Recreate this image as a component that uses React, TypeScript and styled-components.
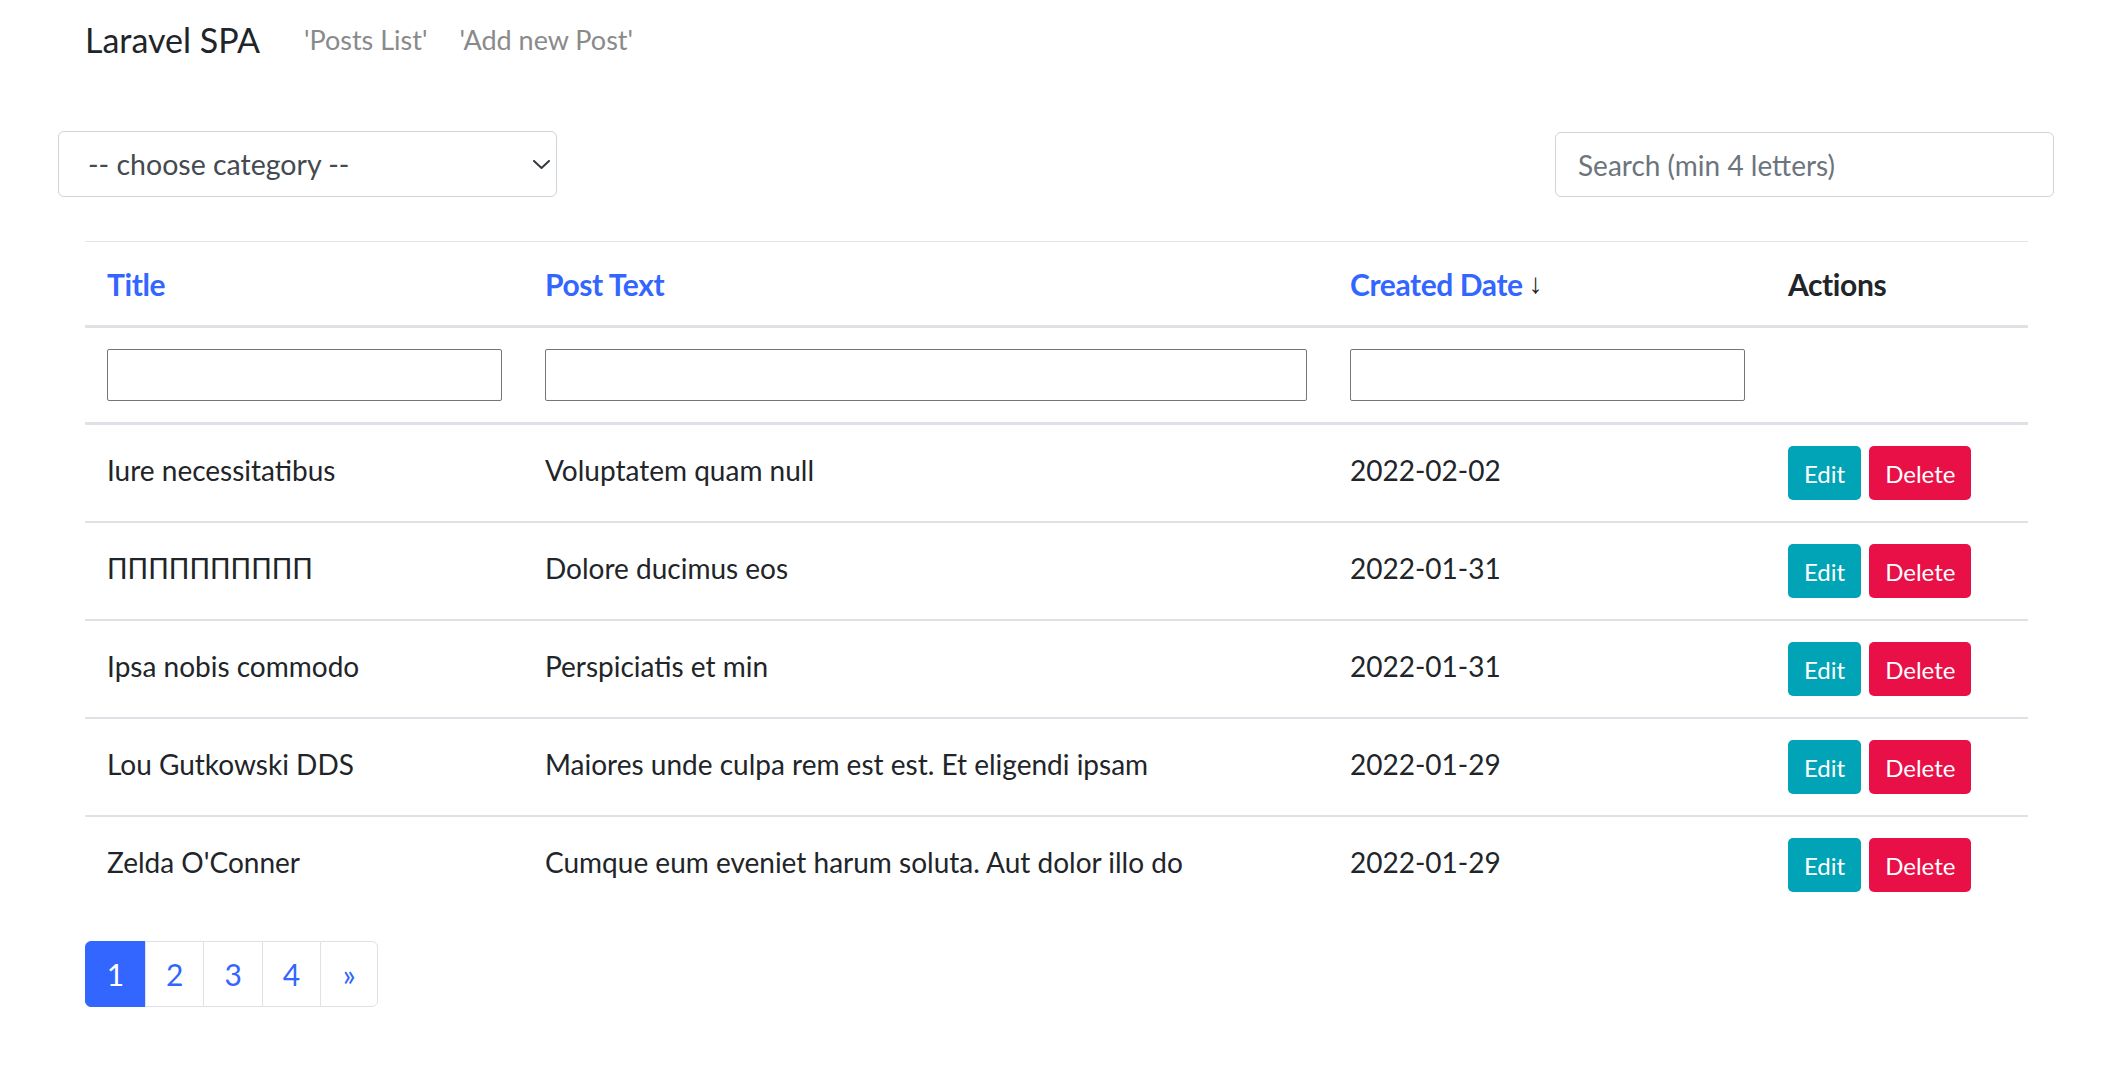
import React from 'react';
import styled, { createGlobalStyle } from 'styled-components';

const Global = createGlobalStyle`
  html, body { margin: 0; padding: 0; background: #ffffff; }
  body { font-family: Lato, "Noto Sans", sans-serif; color: #212529; }
  *, *::before, *::after { box-sizing: border-box; }
`;

const Page = styled.div`
  width: 2126px;
  padding: 0 98px 0 85px;
`;

const Nav = styled.nav`
  display: flex;
  align-items: center;
  padding-top: 19px;
  height: 61px;
`;

const Brand = styled.a`
  font-size: 34px;
  line-height: 1.2;
  color: #212529;
  text-decoration: none;
  margin-right: 44px;
`;

const NavLink = styled.a`
  font-size: 27px;
  line-height: 1.2;
  color: #8a8a8a;
  text-decoration: none;
  margin-right: 32px;
`;

const FilterBar = styled.div`
  display: flex;
  justify-content: space-between;
  margin: 70px -26px 0 -27px;
`;

const SelectWrap = styled.div`
  position: relative;
  width: 499px;
  height: 66px;
`;

const Select = styled.select`
  appearance: none;
  width: 100%;
  height: 100%;
  border: 1px solid #ced4da;
  border-radius: 6px;
  background: #fff;
  padding: 0 40px 0 29px;
  font-family: Lato, "Noto Sans", sans-serif;
  font-size: 28.5px;
  color: #444a50;
  outline: none;
`;

const Chevron = styled.svg`
  position: absolute;
  right: 7px;
  top: 29px;
  width: 17px;
  height: 9px;
  pointer-events: none;
`;

const Search = styled.input`
  width: 499px;
  height: 65px;
  margin-top: 1px;
  border: 1px solid #ced4da;
  border-radius: 6px;
  padding: 0 22px;
  font-family: Lato, "Noto Sans", sans-serif;
  font-size: 28px;
  color: #212529;
  outline: none;
  &::placeholder { color: #6c757d; }
`;

const Table = styled.div`
  margin-top: 44px;
  border-top: 1px solid #e3e5e8;
`;

const Row = styled.div<{ $h: number; $border: number }>`
  display: grid;
  grid-template-columns: 438px 805px 438px 1fr;
  height: ${(p) => p.$h + p.$border}px;
  border-bottom: ${(p) => p.$border}px solid #dee2e6;
`;

const Cell = styled.div<{ $lift?: number }>`
  display: flex;
  align-items: center;
  gap: 8px;
  padding: 0 21px ${(p) => p.$lift || 0}px 22px;
  font-size: 28px;
  color: #212529;
  white-space: nowrap;
  overflow: hidden;
`;

const HeadLink = styled.a<{ $plain?: boolean }>`
  font-size: 30px;
  font-weight: 700;
  color: ${(p) => (p.$plain ? '#212529' : '#3366ff')};
  text-decoration: none;
  letter-spacing: -0.4px;
`;

const SortArrow = styled.span`
  font-family: "Liberation Sans", sans-serif;
  font-weight: 400;
  font-size: 28px;
  color: #212529;
  margin-left: -2px;
`;

const ColFilter = styled.input`
  width: 100%;
  height: 52px;
  border: 1px solid #767676;
  border-radius: 2px;
  padding: 0 6px;
  font-size: 20px;
  outline: none;
`;

const Btn = styled.button<{ $variant: 'info' | 'danger' }>`
  height: 54px;
  padding: 0 16px;
  border: none;
  border-radius: 5px;
  font-family: Lato, "Noto Sans", sans-serif;
  font-size: 24px;
  color: #fff;
  background: ${(p) => (p.$variant === 'info' ? '#00a4b6' : '#e91047')};
  cursor: pointer;
`;

const Pager = styled.ul`
  display: flex;
  list-style: none;
  margin: 28px 0 0 0;
  padding: 0;
`;

const PageItem = styled.li<{ $active?: boolean }>`
  height: 66px;
  min-width: 58px;
  padding: 0 20px;
  display: flex;
  align-items: center;
  justify-content: center;
  font-size: 30px;
  border: 1px solid ${(p) => (p.$active ? '#3366ff' : '#dee2e6')};
  background: ${(p) => (p.$active ? '#3366ff' : '#fff')};
  color: ${(p) => (p.$active ? '#fff' : '#3366ff')};
  & + & { margin-left: -1px; }
  &:first-child { border-radius: 6px 0 0 6px; min-width: 61px; }
  &:last-child { border-radius: 0 6px 6px 0; }
`;

const posts = [
  { title: 'Iure necessitatibus', text: 'Voluptatem quam null', date: '2022-02-02' },
  { title: 'ПППППППППП', text: 'Dolore ducimus eos', date: '2022-01-31' },
  { title: 'Ipsa nobis commodo', text: 'Perspiciatis et min', date: '2022-01-31' },
  { title: 'Lou Gutkowski DDS', text: 'Maiores unde culpa rem est est. Et eligendi ipsam', date: '2022-01-29' },
  { title: "Zelda O'Conner", text: 'Cumque eum eveniet harum soluta. Aut dolor illo do', date: '2022-01-29' },
];

export default function App() {
  return (
    <Page>
      <Global />
      <Nav>
        <Brand href="#">Laravel SPA</Brand>
        <NavLink href="#">'Posts List'</NavLink>
        <NavLink href="#">'Add new Post'</NavLink>
      </Nav>
      <FilterBar>
        <SelectWrap>
          <Select defaultValue="">
            <option value="">-- choose category --</option>
          </Select>
          <Chevron viewBox="0 0 17 9">
            <path d="M1 1l7.5 7 7.5-7" fill="none" stroke="#343a40" strokeWidth="2" strokeLinecap="round" strokeLinejoin="round" />
          </Chevron>
        </SelectWrap>
        <Search placeholder="Search (min 4 letters)" />
      </FilterBar>
      <Table>
        <Row $h={83} $border={3}>
          <Cell><HeadLink href="#">Title</HeadLink></Cell>
          <Cell><HeadLink href="#">Post Text</HeadLink></Cell>
          <Cell>
            <HeadLink href="#">Created Date</HeadLink>
            <SortArrow>↓</SortArrow>
          </Cell>
          <Cell><HeadLink as="span" $plain>Actions</HeadLink></Cell>
        </Row>
        <Row $h={94} $border={3}>
          <Cell><ColFilter /></Cell>
          <Cell><ColFilter /></Cell>
          <Cell><ColFilter /></Cell>
          <Cell />
        </Row>
        {posts.map((p, i) => (
          <Row key={i} $h={96} $border={i === posts.length - 1 ? 0 : 2}>
            <Cell $lift={7}>{p.title}</Cell>
            <Cell $lift={7}>{p.text}</Cell>
            <Cell $lift={7}>{p.date}</Cell>
            <Cell>
              <Btn $variant="info">Edit</Btn>
              <Btn $variant="danger">Delete</Btn>
            </Cell>
          </Row>
        ))}
      </Table>
      <Pager>
        <PageItem $active>1</PageItem>
        <PageItem>2</PageItem>
        <PageItem>3</PageItem>
        <PageItem>4</PageItem>
        <PageItem>»</PageItem>
      </Pager>
    </Page>
  );
}
